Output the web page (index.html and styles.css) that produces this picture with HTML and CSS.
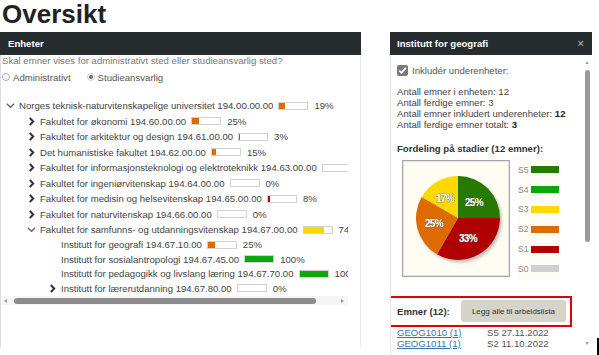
FILE: index.html
```html
<!DOCTYPE html>
<html lang="no">
<head>
    <meta charset="UTF-8">
    <meta name="viewport" content="width=device-width, initial-scale=1.0">
    <title>Oversikt</title>
    <link rel="stylesheet" href="styles.css">
</head>
<body>
    <h1>Oversikt</h1>
    <main class="layout">
        <section class="units">
            <div class="panel-head">Enheter</div>
            <div class="units-body">
                <p class="question">Skal emner vises for administrativt sted eller studieansvarlig sted?</p>
                <div class="choice">
                    <span class="radio"></span><span>Administrativt</span>
                    <span class="radio on"></span><span>Studieansvarlig</span>
                </div>
                <div class="tree">
                    <div class="row lvl0">
                        <span class="tog"><svg width="9" height="9" viewBox="0 0 9 9"><polyline points="0.8,2.8 4.5,6.3 8.2,2.8" fill="none" stroke="#666" stroke-width="1.4"/></svg></span>
                        <span class="name">Norges teknisk-naturvitenskapelige universitet 194.00.00.00</span>
                        <span class="bar"><i class="s2" style="width:19%"></i></span><span class="pct">19%</span>
                    </div>
                    <div class="row lvl1">
                        <span class="tog"><svg width="9" height="9" viewBox="0 0 9 9"><polyline points="2.8,1 6.2,4.5 2.8,8" fill="none" stroke="#333" stroke-width="2"/></svg></span>
                        <span class="name">Fakultet for økonomi 194.60.00.00</span>
                        <span class="bar"><i class="s2" style="width:25%"></i></span><span class="pct">25%</span>
                    </div>
                    <div class="row lvl1">
                        <span class="tog"><svg width="9" height="9" viewBox="0 0 9 9"><polyline points="2.8,1 6.2,4.5 2.8,8" fill="none" stroke="#333" stroke-width="2"/></svg></span>
                        <span class="name">Fakultet for arkitektur og design 194.61.00.00</span>
                        <span class="bar"><i class="s1l" style="width:3%"></i></span><span class="pct">3%</span>
                    </div>
                    <div class="row lvl1">
                        <span class="tog"><svg width="9" height="9" viewBox="0 0 9 9"><polyline points="2.8,1 6.2,4.5 2.8,8" fill="none" stroke="#333" stroke-width="2"/></svg></span>
                        <span class="name">Det humanistiske fakultet 194.62.00.00</span>
                        <span class="bar"><i class="s2" style="width:15%"></i></span><span class="pct">15%</span>
                    </div>
                    <div class="row lvl1">
                        <span class="tog"><svg width="9" height="9" viewBox="0 0 9 9"><polyline points="2.8,1 6.2,4.5 2.8,8" fill="none" stroke="#333" stroke-width="2"/></svg></span>
                        <span class="name">Fakultet for informasjonsteknologi og elektroteknikk 194.63.00.00</span>
                        <span class="bar"><i class="s2" style="width:0%"></i></span><span class="pct">0%</span>
                    </div>
                    <div class="row lvl1">
                        <span class="tog"><svg width="9" height="9" viewBox="0 0 9 9"><polyline points="2.8,1 6.2,4.5 2.8,8" fill="none" stroke="#333" stroke-width="2"/></svg></span>
                        <span class="name">Fakultet for ingeniørvitenskap 194.64.00.00</span>
                        <span class="bar"><i class="s2" style="width:0%"></i></span><span class="pct">0%</span>
                    </div>
                    <div class="row lvl1">
                        <span class="tog"><svg width="9" height="9" viewBox="0 0 9 9"><polyline points="2.8,1 6.2,4.5 2.8,8" fill="none" stroke="#333" stroke-width="2"/></svg></span>
                        <span class="name">Fakultet for medisin og helsevitenskap 194.65.00.00</span>
                        <span class="bar"><i class="s1" style="width:8%"></i></span><span class="pct">8%</span>
                    </div>
                    <div class="row lvl1">
                        <span class="tog"><svg width="9" height="9" viewBox="0 0 9 9"><polyline points="2.8,1 6.2,4.5 2.8,8" fill="none" stroke="#333" stroke-width="2"/></svg></span>
                        <span class="name">Fakultet for naturvitenskap 194.66.00.00</span>
                        <span class="bar"><i class="s2" style="width:0%"></i></span><span class="pct">0%</span>
                    </div>
                    <div class="row lvl1">
                        <span class="tog"><svg width="9" height="9" viewBox="0 0 9 9"><polyline points="0.8,2.8 4.5,6.3 8.2,2.8" fill="none" stroke="#666" stroke-width="1.4"/></svg></span>
                        <span class="name">Fakultet for samfunns- og utdanningsvitenskap 194.67.00.00</span>
                        <span class="bar"><i class="s3" style="width:74%"></i></span><span class="pct">74%</span>
                    </div>
                    <div class="row lvl2 sub">
                        <span class="tog"></span>
                        <span class="name">Institutt for geografi 194.67.10.00</span>
                        <span class="bar"><i class="s2" style="width:25%"></i></span><span class="pct">25%</span>
                    </div>
                    <div class="row lvl2 sub">
                        <span class="tog"></span>
                        <span class="name">Institutt for sosialantropologi 194.67.45.00</span>
                        <span class="bar"><i class="s4" style="width:100%"></i></span><span class="pct">100%</span>
                    </div>
                    <div class="row lvl2 sub">
                        <span class="tog"></span>
                        <span class="name">Institutt for pedagogikk og livslang læring 194.67.70.00</span>
                        <span class="bar"><i class="s4" style="width:100%"></i></span><span class="pct">100%</span>
                    </div>
                    <div class="row lvl2 sub">
                        <span class="tog"><svg width="9" height="9" viewBox="0 0 9 9"><polyline points="2.8,1 6.2,4.5 2.8,8" fill="none" stroke="#333" stroke-width="2"/></svg></span>
                        <span class="name">Institutt for lærerutdanning 194.67.80.00</span>
                        <span class="bar"><i class="s2" style="width:0%"></i></span><span class="pct">0%</span>
                    </div>
                </div>
                <div class="hscroll">
                    <span class="arr-left"></span>
                    <span class="thumb"></span>
                    <span class="arr-right"></span>
                </div>
            </div>
        </section>

        <section class="side">
            <div class="panel-head side-head"><span>Institutt for geografi</span><span class="close">×</span></div>
            <div class="side-body">
                <div class="side-content">
                    <div class="check-row">
                        <span class="checkbox"><svg width="11" height="11" viewBox="0 0 11 11"><polyline points="2.3,5.6 4.5,7.8 8.8,2.8" fill="none" stroke="#fff" stroke-width="1.8"/></svg></span>
                        <span>Inkludér underenheter:</span>
                    </div>
                    <div class="stats">
                        <div>Antall emner i enheten: 12</div>
                        <div>Antall ferdige emner: 3</div>
                        <div>Antall emner inkludert underenheter: <b>12</b></div>
                        <div>Antall ferdige emner totalt: <b>3</b></div>
                    </div>
                    <div class="chart-title">Fordeling på stadier (12 emner):</div>
                    <div class="chart-row">
                        <div class="chart-box">
                            <svg width="106" height="115" viewBox="0 0 106 115">
                                <defs>
                                    <filter id="blur"><feGaussianBlur stdDeviation="1.5"/></filter>
                                </defs>
                                <circle cx="57" cy="59.5" r="42" fill="#999" opacity="0.6" filter="url(#blur)"/>
                                <path d="M55 57 L55 15 A42 42 0 0 1 97 57 Z" fill="#277a00"/>
                                <path d="M55 57 L97 57 A42 42 0 0 1 34 93.37 Z" fill="#b00000"/>
                                <path d="M55 57 L34 93.37 A42 42 0 0 1 18.63 36 Z" fill="#de6b00"/>
                                <path d="M55 57 L18.63 36 A42 42 0 0 1 55 15 Z" fill="#ffd800"/>
                                <g class="pie-label">
                                    <text x="71" y="45">25%</text>
                                    <text x="65" y="81">33%</text>
                                    <text x="31" y="66">25%</text>
                                    <text x="42" y="41">17%</text>
                                </g>
                            </svg>
                        </div>
                        <div class="legend">
                            <div><span>S5</span><i class="s5"></i></div>
                            <div><span>S4</span><i class="s4"></i></div>
                            <div><span>S3</span><i class="s3"></i></div>
                            <div><span>S2</span><i class="s2"></i></div>
                            <div><span>S1</span><i class="s1"></i></div>
                            <div><span>S0</span><i class="s0"></i></div>
                        </div>
                    </div>
                    <div class="courses-head">
                        <b>Emner (12):</b>
                        <button class="add-all">Legg alle til arbeidslista</button>
                    </div>
                    <div class="course"><a href="#">GEOG1010 (1)</a><span>S5 27.11.2022</span></div>
                    <div class="course"><a href="#">GEOG1011 (1)</a><span>S2 11.10.2022</span></div>
                </div>
                <div class="vscroll">
                    <span class="arr-up"></span>
                    <span class="vthumb"></span>
                    <span class="arr-down"></span>
                </div>
            </div>
        </section>
    </main>
    <span class="caret"></span>
</body>
</html>
```

FILE: styles.css
```css
body {
    margin: 0;
    font-family: "Liberation Sans", Arial, sans-serif;
    font-size: 9.6px;
    color: #444;
    overflow: hidden;
    position: relative;
    height: 355px;
}

h1 {
    font-size: 26px;
    line-height: 28px;
    margin: 0 0 4px 2px;
    color: #222;
}

.layout {
    display: flex;
    gap: 29px;
    align-items: flex-start;
}

.panel-head {
    background-color: #272c2e;
    color: #fff;
    font-weight: bold;
    height: 23px;
    line-height: 23px;
    padding: 0 8px;
}

/* Enheter */
.units {
    width: 361px;
}

.units-body {
    height: 293px;
    border-left: 1px solid #ddd;
    border-right: 1px solid #ebebeb;
    padding-left: 1px;
    box-sizing: border-box;
}

.question {
    margin: 0;
    line-height: 12px;
    color: #777;
}

.choice {
    display: flex;
    align-items: center;
    height: 12px;
    margin-top: 4px;
    color: #555;
}

.radio {
    width: 6px;
    height: 6px;
    border: 1px solid #aaa;
    border-radius: 50%;
    margin-right: 3px;
    box-sizing: content-box;
}

.radio.on {
    margin-left: 16px;
    border-color: #ccc;
    background: radial-gradient(circle, #777 0, #777 1.8px, #fff 2.3px);
}

.tree {
    width: 346px;
    margin-top: 15px;
    overflow: hidden;
    white-space: nowrap;
}

.row {
    display: flex;
    align-items: center;
    height: 15.5px;
}

.row.sub {
    height: 14.5px;
}

.lvl0 { padding-left: 4px; }
.lvl1 { padding-left: 25px; }
.lvl2 { padding-left: 46px; }

.tog {
    width: 13px;
    flex: none;
    display: flex;
    align-items: center;
}

.name {
    flex: none;
}

.bar {
    flex: none;
    width: 30px;
    height: 8px;
    margin-left: 5px;
    border: 1px solid #d2d2d2;
    box-sizing: border-box;
    background: #fff;
    display: flex;
}

.bar i {
    display: block;
    height: 100%;
}

.pct {
    margin-left: 6px;
}

.s5 { background-color: #277a00; }
.s4 { background-color: #0aa80a; }
.s3 { background-color: #ffd800; }
.s2 { background-color: #de6b00; }
.s1 { background-color: #b00000; }
.s1l { background-color: #c84848; }
.s0 { background-color: #d0d0d0; }

.hscroll {
    width: 346px;
    height: 9px;
    background: #f5f5f5;
    display: flex;
    align-items: center;
    position: relative;
    margin-top: 0.5px;
}

.hscroll .thumb {
    display: block;
    width: 302px;
    height: 6px;
    margin-left: 12px;
    border-radius: 3px;
    background: #8c8c8c;
}

.arr-left, .arr-right {
    width: 0;
    height: 0;
    border-top: 2px solid transparent;
    border-bottom: 2px solid transparent;
}

.arr-left {
    border-right: 3px solid #999;
    position: absolute;
    left: 2px;
}

.arr-right {
    border-left: 3px solid #999;
    position: absolute;
    right: 4px;
}

/* Institutt-panel */
.side {
    width: 202px;
}

.side-head {
    display: flex;
    justify-content: space-between;
    padding: 0 8px 0 7px;
}

.close {
    color: #9a9a9a;
    font-size: 11px;
}

.side-body {
    display: flex;
    height: 300px;
    border-left: 1px solid #e3e3e3;
    overflow: hidden;
}

.side-content {
    flex: 1;
    padding: 9px 0 0 6px;
    min-width: 0;
}

.check-row {
    display: flex;
    align-items: center;
    gap: 4px;
    height: 12px;
    color: #555;
}

.checkbox {
    width: 11px;
    height: 11px;
    background: #7a7a7a;
    border-radius: 2px;
    display: flex;
}

.stats {
    margin-top: 9.5px;
    line-height: 11px;
}

.stats b {
    color: #222;
}

.chart-title {
    margin-top: 13.5px;
    line-height: 12px;
    font-weight: bold;
    color: #333;
}

.chart-row {
    display: flex;
    margin-top: 5px;
    margin-left: 5px;
    gap: 8px;
}

.chart-box {
    width: 108px;
    height: 117px;
    border: 1px solid #a8a8a8;
    box-shadow: inset 0 0 0 1px #e2e2e2;
    box-sizing: border-box;
    background: #fffcf2;
}

.chart-box svg {
    display: block;
}

.pie-label text {
    font-family: "Liberation Sans", Arial, sans-serif;
    font-weight: bold;
    font-size: 10px;
    letter-spacing: -0.6px;
    fill: #fff;
    stroke: #555;
    stroke-width: 0.6px;
    paint-order: stroke;
    text-anchor: middle;
}

.legend {
    background: #fffdf6;
    width: 42px;
}

.legend div {
    display: flex;
    align-items: center;
    height: 19.8px;
}

.legend span {
    width: 13px;
    color: #888;
    font-size: 8.5px;
}

.legend i {
    display: block;
    width: 28px;
    height: 7px;
}

.courses-head {
    display: flex;
    align-items: center;
    justify-content: space-between;
    width: 183px;
    height: 31px;
    margin-top: 17px;
    margin-left: -8px;
    border: 2px solid #e40000;
    box-sizing: border-box;
    padding: 0 4px 0 6px;
    color: #333;
}

.add-all {
    width: 105px;
    height: 22px;
    border: none;
    border-radius: 3px;
    background: #d5d4ca;
    color: #333;
    font-family: "Liberation Sans", Arial, sans-serif;
    font-size: 8px;
    padding: 0;
}

.course {
    display: flex;
    line-height: 11px;
}

.course:first-of-type {
    margin-top: 7.5px;
}

.course a {
    width: 90px;
    color: #3b73a8;
}

.course span {
    color: #555;
}

.vscroll {
    width: 10px;
    position: relative;
    flex: none;
}

.vthumb {
    position: absolute;
    left: 3px;
    top: 15px;
    width: 5px;
    height: 172px;
    border-radius: 3px;
    background: #999;
}

.arr-up, .arr-down {
    position: absolute;
    left: 3px;
    width: 0;
    height: 0;
    border-left: 2.5px solid transparent;
    border-right: 2.5px solid transparent;
}

.arr-up {
    top: 6px;
    border-bottom: 3px solid #aaa;
}

.arr-down {
    top: 287px;
    border-top: 3px solid #aaa;
}

.caret {
    position: absolute;
    left: 597px;
    top: 338px;
    width: 2px;
    height: 17px;
    background: #000;
}
```
